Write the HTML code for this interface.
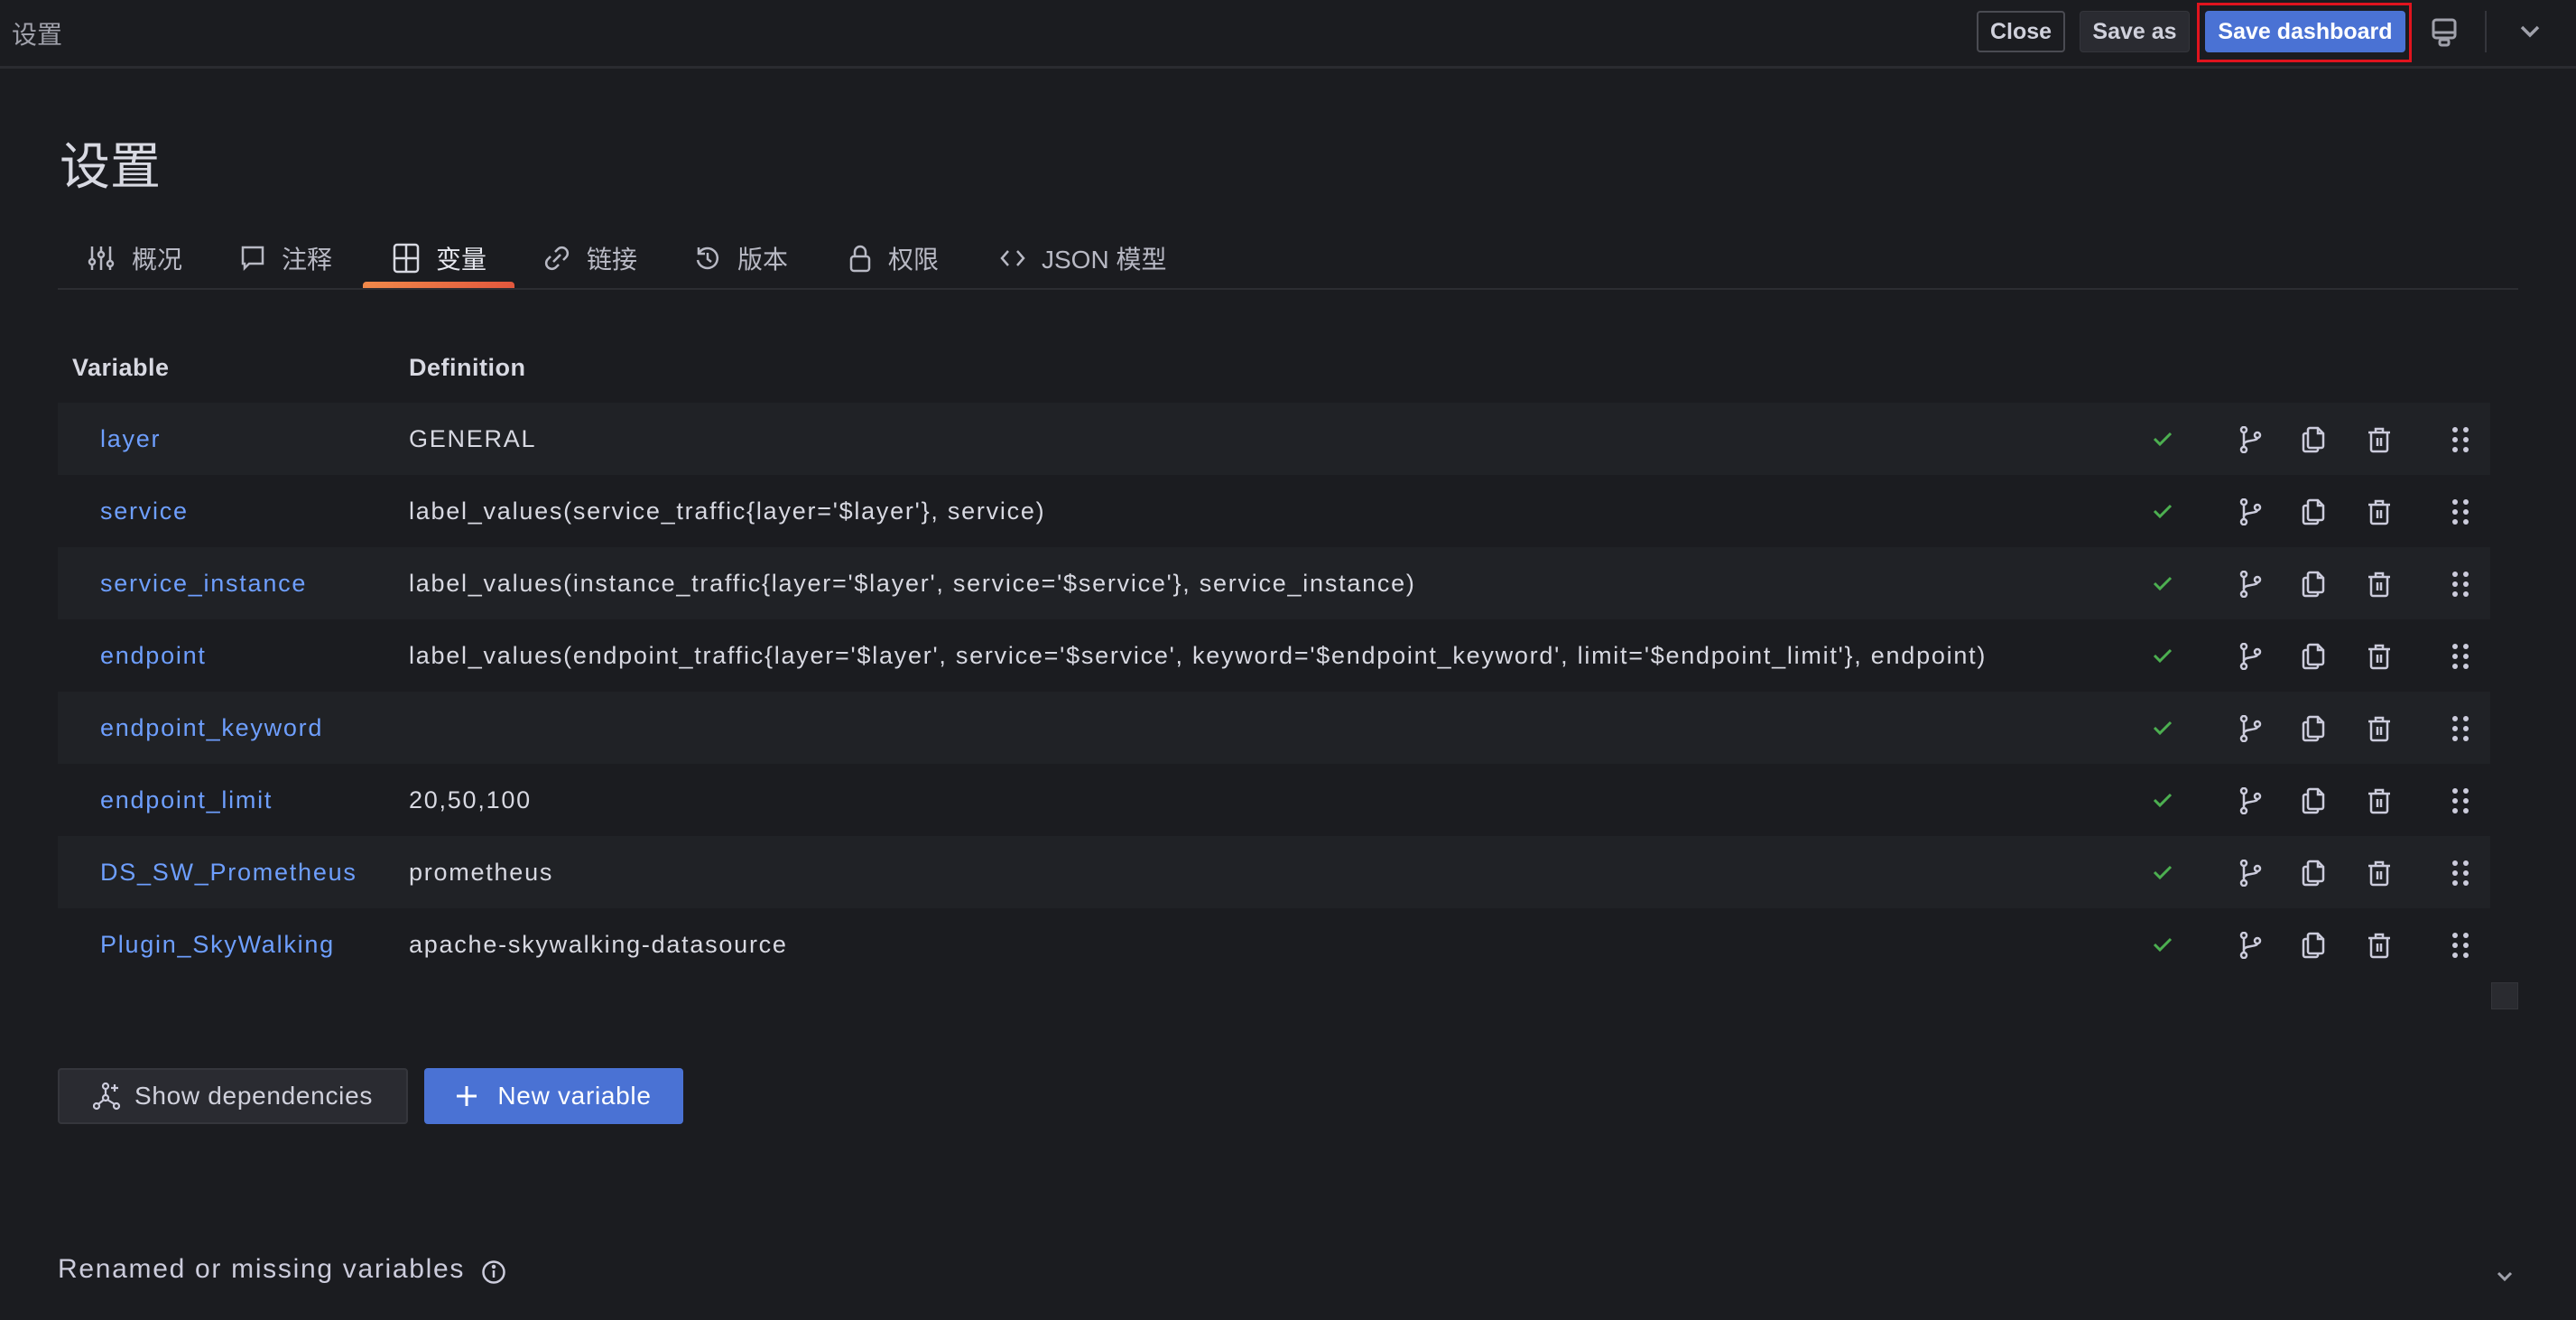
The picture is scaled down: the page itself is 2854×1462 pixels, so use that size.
<!DOCTYPE html>
<html><head><meta charset="utf-8"><style>
*{box-sizing:border-box;margin:0;padding:0}
body{width:2854px;height:1462px;background:#1b1c20;color:#ccccdc;font-family:"Liberation Sans","Noto Sans CJK SC",sans-serif;position:relative;overflow:hidden}
.a{position:absolute}
.btn{position:absolute;border-radius:4px;font-size:25px;display:flex;align-items:center;justify-content:center;font-weight:bold}
.tab{position:absolute;top:266px;font-size:28px;color:#b8b9c4;display:flex;align-items:center;white-space:nowrap}
.tab svg{margin-right:18px}
.row{position:absolute;left:64px;width:2695px;height:80px;font-size:27px;letter-spacing:1.75px}
.row.l{background:#202226}
.row .n{position:absolute;left:47px;top:25px;color:#6e9fff}
.row .d{position:absolute;left:389px;top:25px;color:#d8d9e2;white-space:nowrap}
.row svg{position:absolute;top:26px}
</style></head><body>
<div class="a" style="left:13px;top:17px;font-size:28px;color:#a0a1ab">设置</div>
<div class="a" style="left:0;top:73px;width:2854px;height:3px;background:#2a2b30"></div>
<div class="btn" style="left:2190px;top:12px;width:98px;height:46px;border:2px solid #4a4b52;color:#d0d1dc">Close</div>
<div class="btn" style="left:2304px;top:12px;width:122px;height:46px;background:#2a2b31;border:1px solid #34353b;color:#d0d1dc">Save as</div>
<div class="a" style="left:2434px;top:3px;width:238px;height:66px;border:3px solid #e0141e"></div>
<div class="btn" style="left:2443px;top:12px;width:222px;height:46px;background:#4a72d4;color:#fff">Save dashboard</div>
<svg class="a" style="left:2694px;top:20px" width="28" height="34" viewBox="0 0 28 34" fill="none" stroke="#a0a1ab" stroke-width="3"><rect x="2" y="2" width="24" height="20" rx="3"/><line x1="2" y1="16" x2="26" y2="16"/><rect x="9" y="24" width="10" height="6" rx="2"/></svg>
<div class="a" style="left:2753px;top:12px;width:2px;height:46px;background:#35363c"></div>
<svg class="a" style="left:2792px;top:28px" width="22" height="14" viewBox="0 0 22 14" fill="none" stroke="#a0a1ab" stroke-width="3.5"><polyline points="2,2 11,11 20,2"/></svg>

<div class="a" style="left:66px;top:140px;font-size:56px;color:#d8d9e2">设置</div>

<div class="tab" style="left:96px"><svg width="32" height="32" viewBox="0 0 32 32" fill="none" stroke="#b8b9c4" stroke-width="2.5"><line x1="6" y1="3" x2="6" y2="29"/><line x1="16" y1="3" x2="16" y2="29"/><line x1="26" y1="3" x2="26" y2="29"/><circle cx="6" cy="20" r="3" fill="#1b1c20"/><circle cx="16" cy="12" r="3" fill="#1b1c20"/><circle cx="26" cy="22" r="3" fill="#1b1c20"/></svg>概况</div>
<div class="tab" style="left:266px"><svg width="28" height="30" viewBox="0 0 28 30" fill="none" stroke="#b8b9c4" stroke-width="2.5"><path d="M3 3h22v18H10l-5 5v-5H3z"/></svg>注释</div>
<div class="tab" style="left:435px;color:#e8e9f0"><svg width="30" height="34" viewBox="0 0 30 34" fill="none" stroke="#d8d9e2" stroke-width="2.5"><rect x="2" y="2" width="26" height="30" rx="3"/><line x1="15" y1="2" x2="15" y2="32"/><line x1="2" y1="17" x2="28" y2="17"/></svg>变量</div>
<div class="tab" style="left:602px"><svg width="30" height="30" viewBox="0 0 30 30" fill="none" stroke="#b8b9c4" stroke-width="2.5"><path d="M13 8l3-3a6 6 0 0 1 9 9l-3 3M17 22l-3 3a6 6 0 0 1-9-9l3-3M11 19l8-8"/></svg>链接</div>
<div class="tab" style="left:769px"><svg width="30" height="30" viewBox="0 0 30 30" fill="none" stroke="#b8b9c4" stroke-width="2.5"><path d="M5 10A11 11 0 1 1 4 17M5 3v7h7M15 9v7l4 3"/></svg>版本</div>
<div class="tab" style="left:940px"><svg width="26" height="32" viewBox="0 0 26 32" fill="none" stroke="#b8b9c4" stroke-width="2.5"><rect x="3" y="14" width="20" height="16" rx="3"/><path d="M7 14V9a6 6 0 0 1 12 0v5"/></svg>权限</div>
<div class="tab" style="left:1108px"><svg width="28" height="24" viewBox="0 0 28 24" fill="none" stroke="#b8b9c4" stroke-width="2.5"><polyline points="9,4 2,12 9,20"/><polyline points="19,4 26,12 19,20"/></svg>JSON 模型</div>
<div class="a" style="left:402px;top:312px;width:168px;height:7px;border-radius:4px 4px 0 0;background:linear-gradient(90deg,#f0894a,#e2573d)"></div>
<div class="a" style="left:64px;top:319px;width:2726px;height:2px;background:#2c2d32"></div>

<div class="a" style="left:80px;top:392px;font-size:27px;font-weight:bold;color:#d8d9e2;letter-spacing:0.5px">Variable</div>
<div class="a" style="left:453px;top:392px;font-size:27px;font-weight:bold;color:#d8d9e2;letter-spacing:0.5px">Definition</div>

<div id="rows"></div>
<script>
var data=[["layer","GENERAL"],["service","label_values(service_traffic{layer='$layer'}, service)"],["service_instance","label_values(instance_traffic{layer='$layer', service='$service'}, service_instance)"],["endpoint","label_values(endpoint_traffic{layer='$layer', service='$service', keyword='$endpoint_keyword', limit='$endpoint_limit'}, endpoint)"],["endpoint_keyword",""],["endpoint_limit","20,50,100"],["DS_SW_Prometheus","prometheus"],["Plugin_SkyWalking","apache-skywalking-datasource"]];
var h="";
data.forEach(function(r,i){
h+='<div class="row'+(i%2==0?' l':'')+'" style="top:'+(446+i*80)+'px"><span class="n">'+r[0]+'</span><span class="d">'+r[1]+'</span>'+
'<svg style="left:2320px" width="24" height="28" viewBox="0 0 24 28" fill="none" stroke="#4caf50" stroke-width="3"><polyline points="3,14 9,20 21,8"/></svg>'+
'<svg style="left:2416px" width="26" height="30" viewBox="0 0 26 30" fill="none" stroke="#ccccdc" stroke-width="2.5"><circle cx="6" cy="4" r="3"/><circle cx="6" cy="26" r="3"/><circle cx="21" cy="10" r="3"/><line x1="6" y1="7" x2="6" y2="23"/><path d="M6 20c0-5 15-3 15-7"/></svg>'+
'<svg style="left:2486px" width="26" height="30" viewBox="0 0 26 30" fill="none" stroke="#ccccdc" stroke-width="2.5"><path d="M9 2h9l6 6v14a2 2 0 0 1-2 2H9a2 2 0 0 1-2-2V4a2 2 0 0 1 2-2z"/><path d="M7 8H4a2 2 0 0 0-2 2v16a2 2 0 0 0 2 2h12a2 2 0 0 0 2-2v-2"/><path d="M18 2v6h6"/></svg>'+
'<svg style="left:2559px" width="26" height="30" viewBox="0 0 26 30" fill="none" stroke="#ccccdc" stroke-width="2.5"><line x1="1" y1="7" x2="25" y2="7"/><path d="M9 7V3h8v4"/><path d="M4 7v19a2 2 0 0 0 2 2h14a2 2 0 0 0 2-2V7"/><line x1="11" y1="13" x2="11" y2="22"/><line x1="15" y1="13" x2="15" y2="22"/></svg>'+
'<svg style="left:2652px" width="20" height="30" viewBox="0 0 20 30" fill="#ccccdc"><circle cx="4" cy="4" r="3"/><circle cx="16" cy="4" r="3"/><circle cx="4" cy="15" r="3"/><circle cx="16" cy="15" r="3"/><circle cx="4" cy="26" r="3"/><circle cx="16" cy="26" r="3"/></svg></div>';
});
document.getElementById("rows").innerHTML=h;
</script>
<div class="a" style="left:2760px;top:1088px;width:30px;height:30px;background:#2a2b30;border:1px solid #34353a"></div>

<div class="btn" style="left:64px;top:1183px;width:388px;height:62px;background:#2a2b31;border:2px solid #35363c;color:#d0d1dc;font-weight:normal;font-size:28px;letter-spacing:0.7px"><svg width="32" height="32" viewBox="0 0 32 32" fill="none" stroke="#ccccdc" stroke-width="2.2" style="margin-right:14px"><circle cx="14" cy="5" r="3"/><circle cx="14" cy="18" r="3"/><circle cx="4" cy="27" r="3"/><circle cx="26" cy="27" r="3"/><line x1="14" y1="8" x2="14" y2="15"/><line x1="12" y1="20" x2="6" y2="25"/><line x1="16" y1="20" x2="24" y2="25"/><line x1="24" y1="3" x2="24" y2="11"/><line x1="20" y1="7" x2="28" y2="7"/></svg>Show dependencies</div>
<div class="btn" style="left:470px;top:1183px;width:287px;height:62px;background:#4a72d4;color:#fff;font-weight:normal;font-size:28px;letter-spacing:0.7px"><svg width="24" height="24" viewBox="0 0 24 24" stroke="#fff" stroke-width="3" style="margin-right:22px"><line x1="12" y1="1" x2="12" y2="23"/><line x1="1" y1="12" x2="23" y2="12"/></svg>New variable</div>

<div class="a" style="left:64px;top:1389px;font-size:30px;color:#ccccdc;letter-spacing:1.7px">Renamed or missing variables</div>
<svg class="a" style="left:533px;top:1395px" width="28" height="28" viewBox="0 0 28 28" fill="none" stroke="#ccccdc" stroke-width="2.5"><circle cx="14" cy="14" r="11.5"/><line x1="14" y1="12" x2="14" y2="20"/><circle cx="14" cy="8" r="1" fill="#ccccdc"/></svg>
<svg class="a" style="left:2766px;top:1408px" width="18" height="12" viewBox="0 0 18 12" fill="none" stroke="#a0a1ab" stroke-width="3"><polyline points="2,2 9,9 16,2"/></svg>
</body></html>
